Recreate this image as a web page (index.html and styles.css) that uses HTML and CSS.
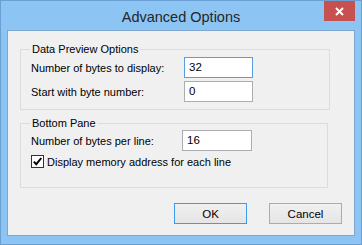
FILE: index.html
```html
<!DOCTYPE html>
<html lang="en">
<head>
  <meta charset="UTF-8" />
  <title>Advanced Options</title>
  <link rel="stylesheet" href="styles.css">
</head>
<body>
<div class="window">
  <div class="titlebar">
    <span></span>
    <div class="title">Advanced Options</div>
    <div class="close">
      <svg width="9" height="9" viewBox="0 0 9 9"><path d="M1 1 L8 8 M8 1 L1 8" stroke="#fff" stroke-width="2"/></svg>
    </div>
  </div>

  <div class="client">
    <fieldset class="group group-preview">
      <legend>Data Preview Options</legend>
      <div class="row">
        <label>Number of bytes to display:</label>
        <div class="field focused">32</div>
      </div>
      <div class="row">
        <label>Start with byte number:</label>
        <div class="field">0</div>
      </div>
    </fieldset>

    <fieldset class="group group-bottom">
      <legend>Bottom Pane</legend>
      <div class="row">
        <label>Number of bytes per line:</label>
        <div class="field">16</div>
      </div>
      <div class="check-row">
        <span class="checkbox">
          <svg width="11" height="11" viewBox="0 0 11 11"><path d="M1.8 5.6 L4.3 8.2 L9.3 2" fill="none" stroke="#000" stroke-width="1.9"/></svg>
        </span>
        <span>Display memory address for each line</span>
      </div>
    </fieldset>

    <div class="buttons">
      <button class="btn default">OK</button>
      <button class="btn">Cancel</button>
    </div>
  </div>
</div>
</body>
</html>
```

FILE: styles.css
```css
body {
  margin: 0;
  font-family: 'Liberation Sans', Arial, sans-serif;
  font-size: 11px;
  color: #000;
}
.window {
  width: 362px;
  height: 245px;
  box-sizing: border-box;
  background: #8cc5f4;
  border: 1px solid #6b9fd1;
  display: flex;
  flex-direction: column;
  padding: 0 6px 8px 6px;
}
.titlebar {
  height: 29px;
  display: grid;
  grid-template-columns: 1fr auto 1fr;
  align-items: start;
}
.title {
  font-size: 14.5px;
  color: #262626;
  line-height: 16px;
  padding-top: 8px;
}
.close {
  justify-self: end;
  width: 31px;
  height: 20px;
  background: #c75050;
  display: flex;
  align-items: center;
  justify-content: center;
}
.client {
  flex: 1;
  background: #f0f0f0;
  border: 1px solid #7fa6cc;
  padding: 0 12px;
  display: flex;
  flex-direction: column;
}
.group {
  margin: 0;
  border: 1px solid #dcdcdc;
  padding: 0 0 0 10px;
}
.group legend {
  padding: 0 2px;
  margin-left: -1px;
  line-height: 14px;
}
.group-preview {
  margin-top: 11px;
  width: 310px;
  box-sizing: border-box;
  padding-top: 1px;
  padding-bottom: 7px;
}
.group-bottom {
  margin-top: 6px;
  width: 308px;
  box-sizing: border-box;
  padding-bottom: 19px;
}
.row {
  display: grid;
  align-items: center;
  height: 21px;
}
.row + .row {
  margin-top: 3px;
}
.group-preview .row {
  grid-template-columns: 153px 69px;
}
.group-bottom .row {
  grid-template-columns: 151px 70px;
}
.field {
  height: 21px;
  box-sizing: border-box;
  background: #fff;
  border: 1px solid #abadb3;
  padding: 0 4px;
  line-height: 19px;
  font-size: 11.5px;
}
.field.focused {
  border-color: #569de5;
}
.check-row {
  display: flex;
  align-items: center;
  gap: 3px;
  margin-top: 4px;
  height: 13px;
}
.checkbox {
  width: 13px;
  height: 13px;
  box-sizing: border-box;
  border: 1px solid #333;
  background: #fff;
  display: flex;
  align-items: center;
  justify-content: center;
}
.buttons {
  display: flex;
  justify-content: flex-end;
  gap: 22px;
  margin-top: 15px;
}
.btn {
  width: 73px;
  height: 21px;
  font-family: inherit;
  font-size: 11.5px;
  color: #000;
  background: linear-gradient(#f0f0f0, #e5e5e5);
  border: 1px solid #acacac;
  padding: 0;
}
.btn.default {
  border-color: #3c9af0;
}
```
